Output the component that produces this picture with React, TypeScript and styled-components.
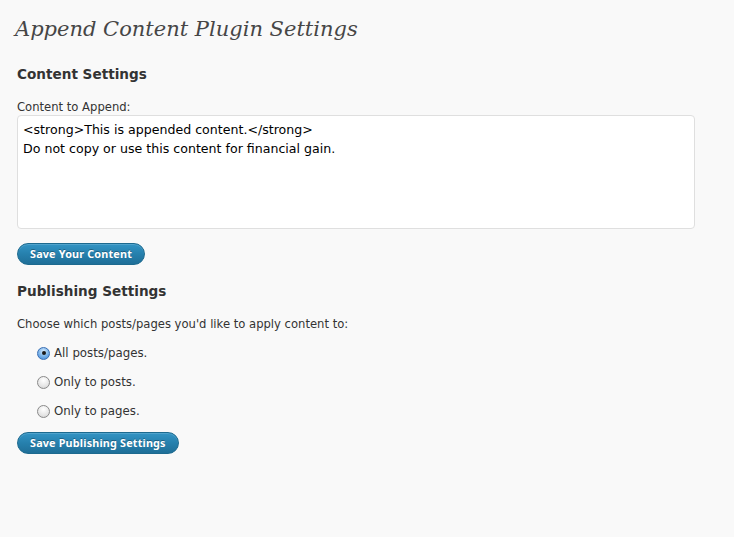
import React, {useState} from "react";
import styled, {createGlobalStyle} from "styled-components";

const GlobalStyle = createGlobalStyle`
  html, body {
    margin: 0;
    padding: 0;
    background: #f9f9f9;
  }

  body {
    font-family: "DejaVu Sans", "Noto Sans", sans-serif;
    color: #333;
  }
`;

const Wrap = styled.div`
  display: flex;
  flex-direction: column;
  align-items: flex-start;
  padding: 11px 0 40px 17px;
  min-height: 537px;
  box-sizing: border-box;
`;

const Title = styled.h2`
  margin: 0 0 0 -2px;
  font-family: "DejaVu Serif", "Liberation Serif", serif;
  font-style: italic;
  font-weight: normal;
  font-size: 21px;
  line-height: 36px;
  color: #464646;
`;

const SectionTitle = styled.h3<{ top: number }>`
  margin: ${({top}) => top}px 0 0;
  font-size: 13.6px;
  font-weight: bold;
  line-height: 20px;
  color: #333;
`;

const Label = styled.label<{ top: number }>`
  display: block;
  margin: ${({top}) => top}px 0 0;
  font-size: 11.6px;
  line-height: 16px;
  color: #333;
`;

const ContentBox = styled.textarea`
  margin-top: 0;
  width: 678px;
  height: 114px;
  box-sizing: border-box;
  padding: 4px 5px;
  border: 1px solid #dfdfdf;
  border-radius: 4px;
  background: #fff;
  font-family: "DejaVu Sans", "Noto Sans", sans-serif;
  font-size: 12.6px;
  line-height: 19px;
  color: #000;
  resize: none;
  outline: none;
`;

const Button = styled.button<{ top: number }>`
  margin-top: ${({top}) => top}px;
  height: 22px;
  padding: 0 12px;
  border: 1px solid #1d6a8f;
  border-radius: 11px;
  background: linear-gradient(to bottom, #3394c4 0%, #2680ad 50%, #1f6f98 100%);
  box-shadow: inset 0 1px 0 rgba(255, 255, 255, 0.15);
  color: #fff;
  font-family: "Noto Sans", "DejaVu Sans", sans-serif;
  font-size: 10.8px;
  font-weight: bold;
  letter-spacing: 0.18px;
  line-height: 20px;
  text-shadow: 0 -1px 0 rgba(0, 0, 0, 0.3);
  cursor: pointer;
`;

const Options = styled.div`
  display: flex;
  flex-direction: column;
  gap: 9px;
  margin-top: 11px;
  padding-left: 20px;
`;

const Option = styled.label`
  display: flex;
  align-items: center;
  gap: 4px;
  height: 20px;
  font-size: 11.8px;
  color: #333;
  cursor: pointer;
`;

const Radio = styled.input`
  appearance: none;
  margin: 0;
  width: 13px;
  height: 13px;
  border-radius: 50%;
  border: 1px solid #8a8a8a;
  box-sizing: border-box;
  background: radial-gradient(circle at 50% 30%, #ffffff 0%, #e6e6e6 60%, #cfcfcf 100%);
  display: grid;
  place-items: center;

  &:checked {
    border-color: #3a6fb4;
    background: radial-gradient(circle at 50% 30%, #d8ecff 0%, #7fb6ea 50%, #3d86d6 100%);
  }

  &:checked::after {
    content: "";
    width: 4px;
    height: 4px;
    border-radius: 50%;
    background: #1a1a1a;
  }
`;

const choices = [
    {value: "all", label: "All posts/pages."},
    {value: "posts", label: "Only to posts."},
    {value: "pages", label: "Only to pages."},
];

export default function App() {
    const [content, setContent] = useState(
        "<strong>This is appended content.</strong>\nDo not copy or use this content for financial gain."
    );
    const [target, setTarget] = useState("all");

    return (
        <>
            <GlobalStyle/>
            <Wrap>
                <Title>Append Content Plugin Settings</Title>

                <SectionTitle top={17}>Content Settings</SectionTitle>
                <Label top={15} htmlFor="append-content">Content to Append:</Label>
                <ContentBox id="append-content" value={content} onChange={e => setContent(e.target.value)}/>
                <Button top={14}>Save Your Content</Button>

                <SectionTitle top={16}>Publishing Settings</SectionTitle>
                <Label top={15} as="p">Choose which posts/pages you'd like to apply content to:</Label>
                <Options>
                    {choices.map(c => (
                        <Option key={c.value}>
                            <Radio type="radio" name="target" value={c.value} checked={target === c.value}
                                   onChange={() => setTarget(c.value)}/>
                            {c.label}
                        </Option>
                    ))}
                </Options>
                <Button top={11}>Save Publishing Settings</Button>
            </Wrap>
        </>
    );
}
